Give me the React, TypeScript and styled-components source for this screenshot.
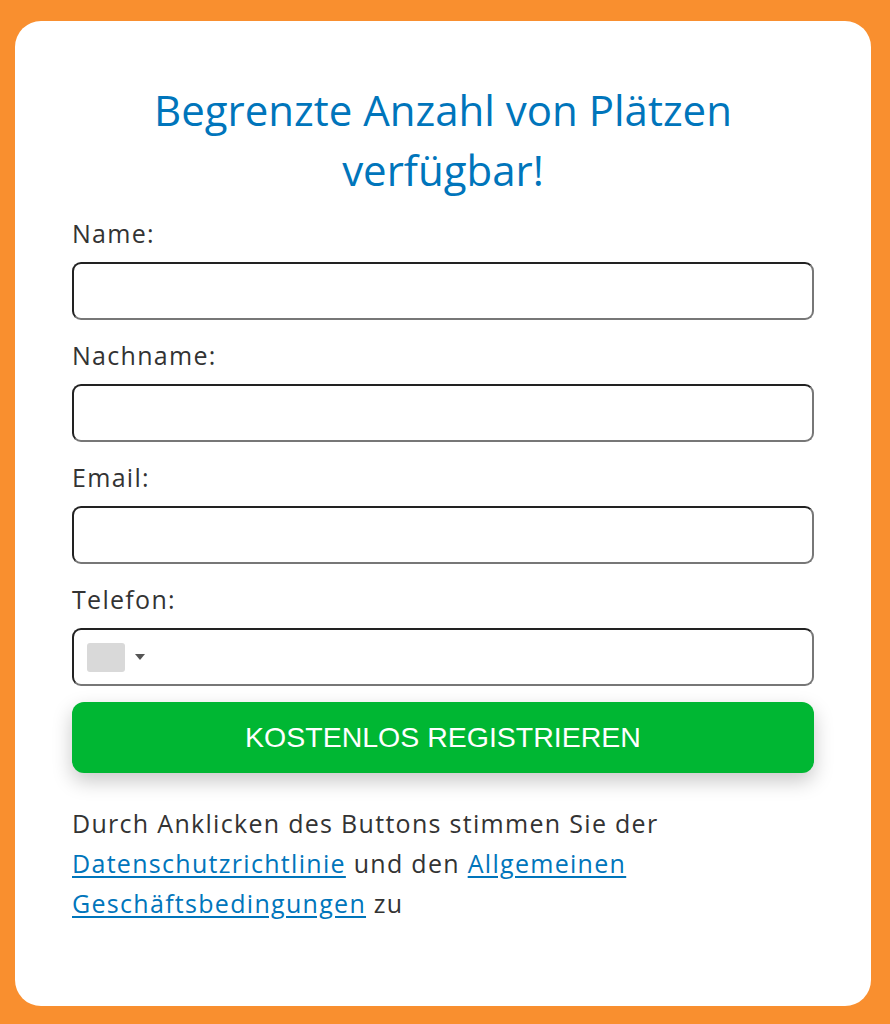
import React from "react";
import styled, { createGlobalStyle } from "styled-components";

const GlobalStyle = createGlobalStyle`
  html, body {
    margin: 0;
    padding: 0;
    background: #f98f2f;
  }
  * {
    box-sizing: border-box;
  }
`;

const Page = styled.div`
  min-height: 1024px;
  background: #f98f2f;
  padding: 21px 19px 18px 15px;
`;

const Card = styled.div`
  background: #fff;
  border-radius: 26px;
  padding: 59px 57px 83px 57px;
  display: flex;
  flex-direction: column;
  font-family: "Open Sans", "Noto Sans", sans-serif;
  color: #333;
`;

const Title = styled.h2`
  margin: 0 0 18px 0;
  font-size: 42px;
  line-height: 60px;
  font-weight: 500;
  color: #0075bb;
  text-align: center;
`;

const Form = styled.form`
  display: flex;
  flex-direction: column;
  gap: 20px;
`;

const Field = styled.div`
  display: flex;
  flex-direction: column;
  gap: 14px;
`;

const Label = styled.label`
  font-size: 25px;
  line-height: 30px;
  letter-spacing: 1.3px;
  color: #333;
`;

const Input = styled.input`
  height: 58px;
  width: 100%;
  border: 2px solid;
  border-color: #222 #777 #777 #222;
  border-radius: 9px;
  background: #fff;
  font-size: 20px;
  padding: 0 14px;
  outline: none;
`;

const PhoneBox = styled.div`
  height: 58px;
  display: flex;
  align-items: center;
  border: 2px solid;
  border-color: #222 #777 #777 #222;
  border-radius: 9px;
  background: #fff;
  padding-left: 13px;
`;

const Flag = styled.div`
  width: 38px;
  height: 29px;
  border-radius: 3px;
  background: #d9d9d9;
`;

const Caret = styled.span`
  width: 0;
  height: 0;
  margin-left: 10px;
  border-left: 5px solid transparent;
  border-right: 5px solid transparent;
  border-top: 6px solid #555;
`;

const PhoneInput = styled.input`
  flex: 1;
  height: 100%;
  border: none;
  background: transparent;
  outline: none;
  font-size: 20px;
  padding: 0 12px;
`;

const Submit = styled.button`
  margin-top: -4px;
  height: 71px;
  border: none;
  border-radius: 12px;
  background: #00b733;
  color: #fff;
  font-family: "Liberation Sans", Arial, sans-serif;
  font-size: 28.5px;
  box-shadow: 0 8px 20px rgba(0, 0, 0, 0.22);
  cursor: pointer;
`;

const Note = styled.p`
  margin: 30px 0 0 0;
  font-size: 25px;
  line-height: 40px;
  letter-spacing: 1.3px;
  color: #333;
`;

const Link = styled.a`
  color: #0075bb;
  text-decoration: underline;
  text-underline-offset: 3px;
`;

export default function App() {
  return (
    <>
      <GlobalStyle />
      <Page>
        <Card>
          <Title>
            Begrenzte Anzahl von Plätzen
            <br />
            verfügbar!
          </Title>
          <Form onSubmit={(e) => e.preventDefault()}>
            <Field>
              <Label htmlFor="name">Name:</Label>
              <Input id="name" type="text" />
            </Field>
            <Field>
              <Label htmlFor="lastname">Nachname:</Label>
              <Input id="lastname" type="text" />
            </Field>
            <Field>
              <Label htmlFor="email">Email:</Label>
              <Input id="email" type="email" />
            </Field>
            <Field>
              <Label htmlFor="phone">Telefon:</Label>
              <PhoneBox>
                <Flag />
                <Caret />
                <PhoneInput id="phone" type="tel" />
              </PhoneBox>
            </Field>
            <Submit type="submit">KOSTENLOS REGISTRIEREN</Submit>
          </Form>
          <Note>
            Durch Anklicken des Buttons stimmen Sie der{" "}
            <Link href="#">Datenschutzrichtlinie</Link> und den{" "}
            <Link href="#">Allgemeinen Geschäftsbedingungen</Link> zu
          </Note>
        </Card>
      </Page>
    </>
  );
}
